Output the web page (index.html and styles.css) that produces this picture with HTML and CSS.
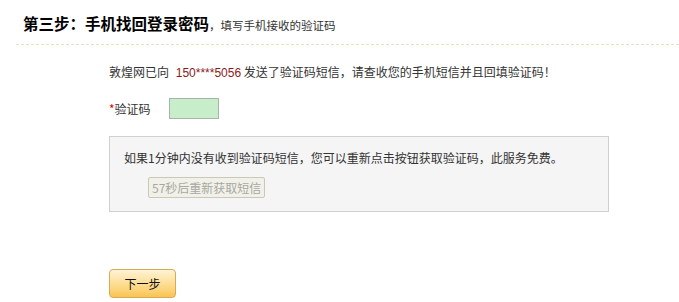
FILE: index.html
```
<!DOCTYPE html>
<html lang="zh">
<head>
<meta charset="utf-8">
<link rel="stylesheet" href="styles.css">
</head>
<body>
<div class="page">
  <div class="step-head">
    <span class="step-title">第三步：手机找回登录密码</span><span class="step-sub">，填写手机接收的验证码</span>
  </div>
  <div class="content">
    <p class="notice">敦煌网已向 <span class="phone">150****5056</span> 发送了验证码短信，请查收您的手机短信并且回填验证码！</p>
    <div class="code-row">
      <label class="code-label"><span class="req">*</span>验证码</label>
      <input class="code-input" type="text">
    </div>
    <div class="tip-box">
      <p class="tip-text">如果1分钟内没有收到验证码短信，您可以重新点击按钮获取验证码，此服务免费。</p>
      <button class="resend" type="button" disabled>57秒后重新获取短信</button>
    </div>
    <button class="next" type="button">下一步</button>
  </div>
</div>
</body>
</html>
```
FILE: styles.css
```
html, body {
  margin: 0;
  padding: 0;
  background: #fff;
}
body {
  font-family: "Noto Sans CJK SC", "Liberation Sans", sans-serif;
  font-size: 12px;
  color: #333;
}
.page {
  width: 679px;
  height: 302px;
  overflow: hidden;
}
.step-head {
  margin-left: 16px;
  padding-left: 7px;
  height: 45px;
  box-sizing: border-box;
  padding-top: 12px;
  border-bottom: 1px dashed #eadfc6;
  line-height: 22px;
}
.step-title {
  font-size: 15.5px;
  font-weight: bold;
  color: #000;
}
.step-sub {
  font-size: 11.5px;
  color: #333;
}
.content {
  padding-left: 109px;
  padding-top: 18px;
}
.notice {
  margin: 0;
  line-height: 18px;
  color: #333;
}
.phone {
  color: #8b1a1a;
  font-family: "Liberation Sans", sans-serif;
  margin-left: 4px;
}
.code-row {
  display: flex;
  align-items: center;
  margin-top: 15px;
  height: 22px;
}
.code-label {
  width: 60px;
  color: #333;
}
.req {
  color: #d00;
}
.code-input {
  width: 50px;
  height: 21px;
  box-sizing: border-box;
  border: 1px solid #a9b4a9;
  background: #c7edcb;
  margin: 0;
  padding: 0;
}
.tip-box {
  margin-top: 17px;
  width: 500px;
  height: 76px;
  box-sizing: border-box;
  border: 1px solid #d0d0d0;
  background: #f5f5f5;
  padding: 13px 0 0 14px;
}
.tip-text {
  margin: 0;
  line-height: 16px;
  color: #333;
}
.resend {
  display: block;
  margin: 11px 0 0 24px;
  height: 21px;
  padding: 0 3px;
  border: 1px solid #ccc8b8;
  border-radius: 2px;
  background: #f1f1ea;
  color: #a8a8a0;
  font-family: "Noto Sans CJK SC", sans-serif;
  font-size: 12px;
  line-height: 19px;
}
.next {
  display: block;
  margin-top: 57px;
  width: 67px;
  height: 29px;
  border: 1px solid #d8ab52;
  border-radius: 4px;
  background: linear-gradient(#fff4d6, #fcd57d 70%, #f8c453);
  color: #111;
  font-family: "Noto Sans CJK SC", sans-serif;
  font-size: 12px;
  padding: 0;
}
```
